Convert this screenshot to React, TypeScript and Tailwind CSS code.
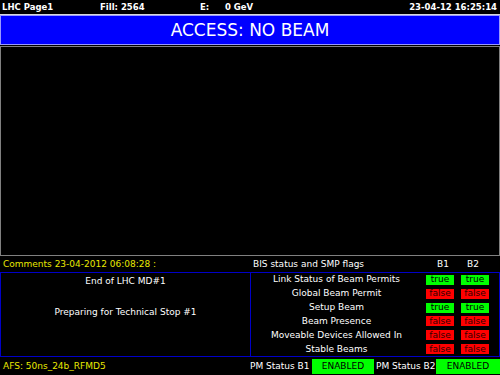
import React from 'react';

const FLAGS: { label: string; b1: boolean; b2: boolean }[] = [
  { label: 'Link Status of Beam Permits', b1: true, b2: true },
  { label: 'Global Beam Permit', b1: false, b2: false },
  { label: 'Setup Beam', b1: true, b2: true },
  { label: 'Beam Presence', b1: false, b2: false },
  { label: 'Moveable Devices Allowed In', b1: false, b2: false },
  { label: 'Stable Beams', b1: false, b2: false },
];

function Flag({ on }: { on: boolean }) {
  return (
    <div
      className={
        on
          ? 'w-[28px] h-[10px] bg-[#00ff00] text-black flex items-center justify-center leading-none'
          : 'w-[28px] h-[10px] bg-[#ff0000] text-[#300000] flex items-center justify-center leading-none'
      }
    >
      {on ? 'true' : 'false'}
    </div>
  );
}

export default function App() {
  return (
    <div className="w-[500px] h-[375px] bg-black flex flex-col overflow-hidden font-['DejaVu_Sans',sans-serif] text-[9px] text-white">
      {/* Header */}
      <div className="h-[15px] shrink-0 flex items-center border-b border-[#d8d8d8] font-bold text-[8.5px] leading-none">
        <div className="w-[100px] pl-[2px]">LHC Page1</div>
        <div className="w-[100px]">Fill: 2564</div>
        <div className="w-[25px]">E:</div>
        <div className="flex-1">0 GeV</div>
        <div className="pr-[3px]">23-04-12 16:25:14</div>
      </div>

      {/* Mode banner */}
      <div className="h-[30px] shrink-0 bg-[#0000ff] border border-[#9a9aff] flex items-center justify-center text-[17px] leading-none pt-[1px]">
        ACCESS: NO BEAM
      </div>

      {/* Plot area */}
      <div className="mt-[1px] h-[210px] shrink-0 border border-[#808080]" />

      {/* Section titles */}
      <div className="h-[16px] shrink-0 flex items-center leading-none">
        <div className="w-[250px] pl-[3px] text-[#e8e800]">Comments 23-04-2012 06:08:28 :</div>
        <div className="flex-1 pl-[3px]">BIS status and SMP flags</div>
        <div className="w-[30px] text-center">B1</div>
        <div className="w-[30px] mr-[12px] text-center">B2</div>
      </div>

      {/* Comments + flags */}
      <div className="h-[85px] shrink-0 flex border-t border-b border-[#0000c8]">
        <div className="w-[251px] border-l border-r border-[#0000c8] flex flex-col items-center">
          <div className="mt-[4px] leading-none">End of LHC MD#1</div>
          <div className="mt-[22px] leading-none">Preparing for Technical Stop #1</div>
        </div>
        <div className="flex-1 border-r border-[#0000c8] flex flex-col">
          {FLAGS.map(f => (
            <div key={f.label} className="h-[14px] flex items-center leading-none">
              <div className="w-[171px] text-center">{f.label}</div>
              <div className="ml-[4px]"><Flag on={f.b1} /></div>
              <div className="ml-[7px]"><Flag on={f.b2} /></div>
            </div>
          ))}
        </div>
      </div>

      {/* Status footer */}
      <div className="flex-1 flex items-center leading-none">
        <div className="w-[250px] pl-[3px] text-[#e8e800]">AFS: 50ns_24b_RFMD5</div>
        <div className="w-[62px]">PM Status B1</div>
        <div className="w-[62px] h-[15px] bg-[#00ff00] text-black flex items-center justify-center">ENABLED</div>
        <div className="w-[62px] pl-[2px]">PM Status B2</div>
        <div className="flex-1 h-[15px] bg-[#00ff00] text-black flex items-center justify-center">ENABLED</div>
      </div>
    </div>
  );
}
